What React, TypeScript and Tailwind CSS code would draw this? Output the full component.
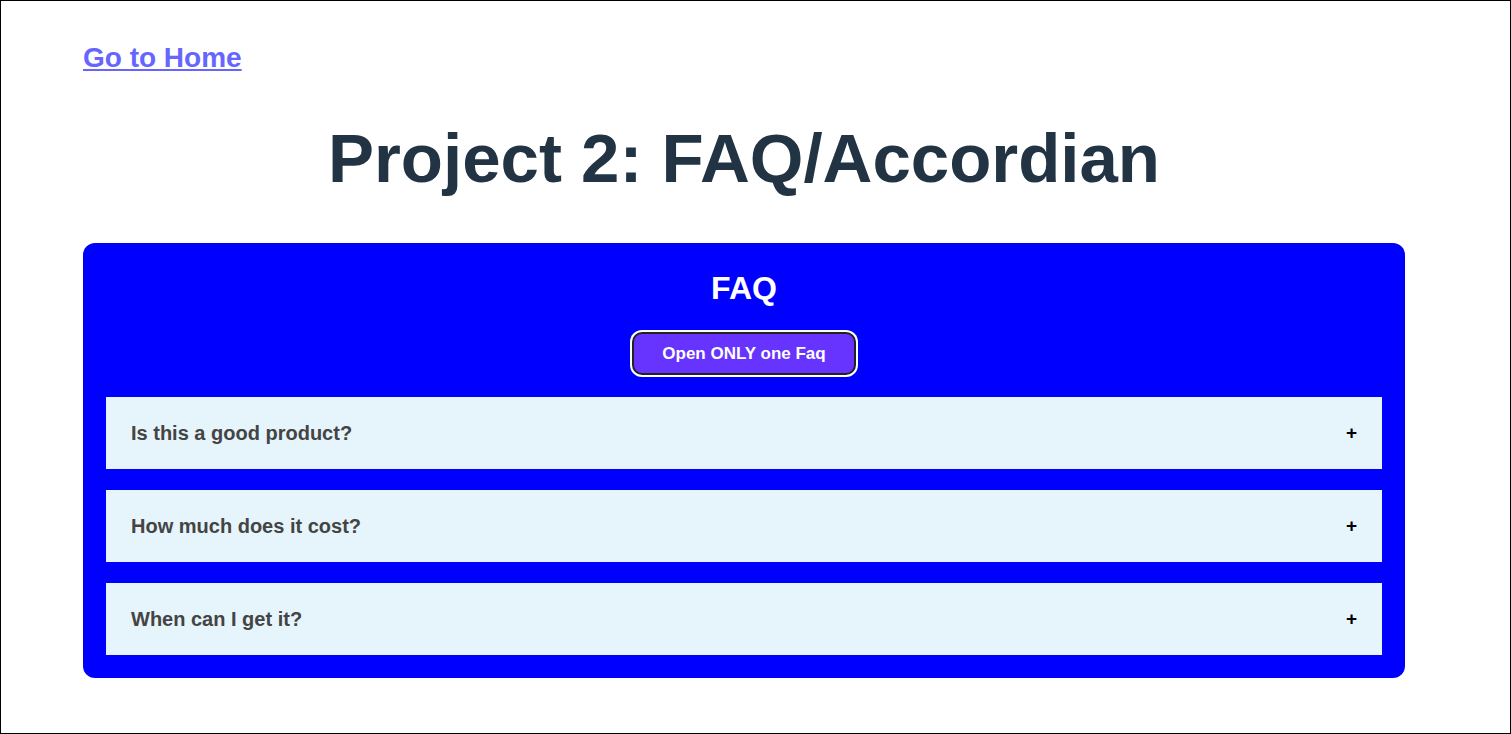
import React, { useState } from 'react';

const faqs = [
  { q: 'Is this a good product?', a: 'Yes, it is one of the best products out there.' },
  { q: 'How much does it cost?', a: 'It costs less than you would think.' },
  { q: 'When can I get it?', a: 'You can get it as soon as tomorrow.' },
];

const App: React.FC = () => {
  const [open, setOpen] = useState<number[]>([]);
  const [onlyOne, setOnlyOne] = useState(false);

  const toggle = (i: number) => {
    if (open.includes(i)) {
      setOpen(open.filter((x) => x !== i));
    } else {
      setOpen(onlyOne ? [i] : [...open, i]);
    }
  };

  return (
    <div className="min-h-[734px] border border-black bg-white font-['Liberation_Sans',Arial,sans-serif]">
      <div className="pl-[82px] pr-[105px] pt-[41px] pb-[55px]">
        <a href="#" className="text-[28px] font-bold leading-[32px] text-[#6666ff] underline">
          Go to Home
        </a>

        <h1 className="mt-[45px] text-center text-[69px] font-bold leading-[80px] text-[#223344]">
          Project 2: FAQ/Accordian
        </h1>

        <div className="mt-[44px] rounded-[12px] bg-[#0000ff] px-[23px] pt-[26px] pb-[23px]">
          <h2 className="text-center text-[32px] font-bold leading-[38px] text-white">FAQ</h2>
          <div className="mt-[25px] flex justify-center">
            <button
              onClick={() => setOnlyOne(!onlyOne)}
              className="h-[43px] w-[224px] rounded-[10px] border-2 border-[#222222] bg-[#6633ff] text-[17px] font-bold text-white shadow-[0_0_0_2px_#ffffff]"
            >
              Open ONLY one Faq
            </button>
          </div>
          <div className="mt-[22px] flex flex-col gap-[21px]">
            {faqs.map((f, i) => (
              <div key={f.q} className="bg-[#e6f5fb]">
                <div
                  onClick={() => toggle(i)}
                  className="flex h-[72px] cursor-pointer items-center justify-between px-[25px]"
                >
                  <span className="text-[20px] font-bold text-[#444444]">{f.q}</span>
                  <span className="text-[19px] font-bold text-black">{open.includes(i) ? '−' : '+'}</span>
                </div>
                {open.includes(i) && (
                  <p className="px-[25px] pb-[20px] text-[16px] text-[#444444]">{f.a}</p>
                )}
              </div>
            ))}
          </div>
        </div>
      </div>
    </div>
  );
};

export default App;
